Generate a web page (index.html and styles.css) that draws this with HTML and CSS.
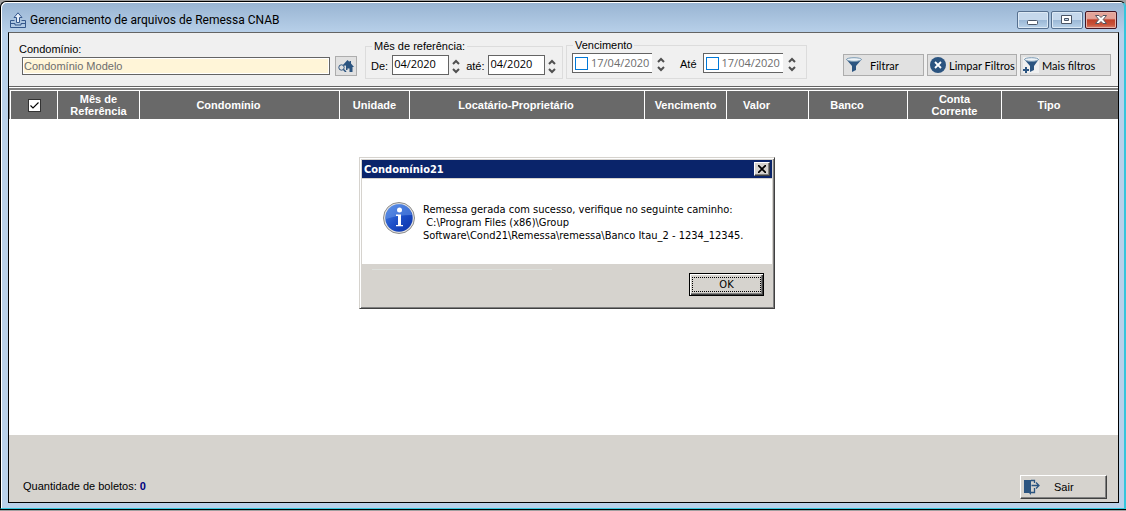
FILE: index.html
```html
<!DOCTYPE html>
<html lang="pt-BR">
  <head>
    <meta charset="UTF-8" />
    <meta name="viewport" content="width=device-width, initial-scale=1.0" />
    <title>Gerenciamento de arquivos de Remessa CNAB</title>
    <link rel="stylesheet" href="styles.css">
  </head>
  <body>
    <div class="window">
      <header class="titlebar">
        <svg class="app-icon" viewBox="0 0 16 16" width="16" height="16" fill="none" stroke="#35588c">
          <path d="M4.500 8.500H0.500V15.500H15.500V8.500H11.500M0.500 11.500H5V13H11V11.500H15.500" />
          <path d="M6.500 10.500V5.500H4L8 0.800L12 5.500H9.500V10.500Z" fill="#e6effa" />
        </svg>
        <h1>Gerenciamento de arquivos de Remessa CNAB</h1>
        <div class="window-buttons">
          <button type="button" class="win-btn" aria-label="Minimizar">
            <svg viewBox="0 0 30 16" width="30" height="16"><rect x="9.500" y="8.500" width="10" height="4" rx="1" fill="#fff" stroke="#4a5566" /></svg>
          </button>
          <button type="button" class="win-btn" aria-label="Maximizar">
            <svg viewBox="0 0 30 16" width="30" height="16"><path d="M9.500 3.500H19.500V11.500H9.500ZM12.500 6.500V8.500H16.500V6.500Z" fill="#fff" fill-rule="evenodd" stroke="#4a5566" /></svg>
          </button>
          <button type="button" class="win-btn win-close" aria-label="Fechar">
            <svg viewBox="0 0 30 16" width="30" height="16"><path d="M9.500 3.500H13L15 5.500L17 3.500H20.500L17.200 7.500L20.500 11.500H17L15 9.500L13 11.500H9.500L12.800 7.500Z" fill="#fff" stroke="#54555f" /></svg>
          </button>
        </div>
      </header>

      <main class="client">
        <form class="filters">
          <div class="field">
            <label for="condominio">Condomínio:</label>
            <div class="field-row">
              <input type="text" id="condominio" value="Condomínio Modelo" />
              <button type="button" class="search-btn" aria-label="Buscar condomínio">
                <svg viewBox="0 0 16 12" width="16" height="12">
                  <path d="M4 6L9.500 0L11.500 2V1H13V3.500L16 7H14.500V12H11.500V8.500H9.500V10H8V5.500Z" fill="#2b5480" />
                  <circle cx="3.500" cy="7.500" r="2.700" fill="#e1e1e1" stroke="#2b5480" />
                  <path d="M5.500 9.500L8 12" stroke="#2b5480" stroke-width="1.500" />
                </svg>
              </button>
            </div>
          </div>

          <fieldset class="months">
            <legend>Mês de referência:</legend>
            <label for="mesDe">De:</label>
            <input type="text" id="mesDe" class="month" value="04/2020" />
            <span class="spin">
              <button type="button" aria-label="Aumentar"><svg viewBox="0 0 8 6" width="8" height="6"><path d="M1 5L4 2L7 5" /></svg></button>
              <button type="button" aria-label="Diminuir"><svg viewBox="0 0 8 6" width="8" height="6"><path d="M1 1L4 4L7 1" /></svg></button>
            </span>
            <label for="mesAte">até:</label>
            <input type="text" id="mesAte" class="month" value="04/2020" />
            <span class="spin">
              <button type="button" aria-label="Aumentar"><svg viewBox="0 0 8 6" width="8" height="6"><path d="M1 5L4 2L7 5" /></svg></button>
              <button type="button" aria-label="Diminuir"><svg viewBox="0 0 8 6" width="8" height="6"><path d="M1 1L4 4L7 1" /></svg></button>
            </span>
          </fieldset>

          <fieldset class="due">
            <legend>Vencimento</legend>
            <div class="date">
              <input type="checkbox" aria-label="Usar data inicial" />
              <input type="text" value="17/04/2020" aria-label="Vencimento de" />
            </div>
            <span class="spin">
              <button type="button" aria-label="Aumentar"><svg viewBox="0 0 8 6" width="8" height="6"><path d="M1 5L4 2L7 5" /></svg></button>
              <button type="button" aria-label="Diminuir"><svg viewBox="0 0 8 6" width="8" height="6"><path d="M1 1L4 4L7 1" /></svg></button>
            </span>
            <label for="vencAte">Até</label>
            <div class="date">
              <input type="checkbox" aria-label="Usar data final" />
              <input type="text" id="vencAte" value="17/04/2020" />
            </div>
            <span class="spin">
              <button type="button" aria-label="Aumentar"><svg viewBox="0 0 8 6" width="8" height="6"><path d="M1 5L4 2L7 5" /></svg></button>
              <button type="button" aria-label="Diminuir"><svg viewBox="0 0 8 6" width="8" height="6"><path d="M1 1L4 4L7 1" /></svg></button>
            </span>
          </fieldset>

          <div class="actions">
            <button type="button" class="action filter">
              <svg viewBox="0 0 16 16" width="16" height="16"><path d="M0 2L6 9V15L10 13V9L16 2Z" fill="#2b5480" /><ellipse cx="8" cy="2.500" rx="7.500" ry="1.800" fill="#eef3f7" stroke="#7d9cb5" /></svg>
              <span>Filtrar</span>
            </button>
            <button type="button" class="action clear">
              <svg viewBox="0 0 16 16" width="16" height="16"><circle cx="8" cy="8" r="8" fill="#2b5480" /><path d="M5 5L11 11M11 5L5 11" stroke="#fff" stroke-width="1.800" /></svg>
              <span>Limpar Filtros</span>
            </button>
            <button type="button" class="action more">
              <svg viewBox="0 0 16 16" width="16" height="16"><rect width="16" height="16" fill="#f0f0f0" /><path d="M1 2L7 9V15L11 13V9L16 2Z" fill="#2b5480" /><ellipse cx="8.500" cy="2.500" rx="7" ry="1.800" fill="#eef3f7" stroke="#7d9cb5" /><path d="M3 10V16M0 13H6" stroke="#f0f0f0" stroke-width="4" /><path d="M3 10V16M0 13H6" stroke="#2b5480" stroke-width="2" /></svg>
              <span>Mais filtros</span>
            </button>
          </div>
        </form>

        <div class="grid">
          <table>
            <colgroup>
              <col class="col-check"><col class="col-month"><col class="col-condo"><col class="col-unit"><col>
              <col class="col-due"><col class="col-value"><col class="col-bank"><col class="col-account"><col class="col-type">
            </colgroup>
            <thead>
              <tr>
                <th><input type="checkbox" class="check-all" aria-label="Selecionar todos" checked /></th>
                <th>Mês de Referência</th>
                <th class="sortable">Condomínio</th>
                <th>Unidade</th>
                <th class="sortable">Locatário-Proprietário</th>
                <th>Vencimento</th>
                <th class="sortable">Valor</th>
                <th class="sortable">Banco</th>
                <th>Conta<br />Corrente</th>
                <th class="sortable">Tipo</th>
              </tr>
            </thead>
            <tbody></tbody>
          </table>
        </div>

        <footer class="footer">
          <p>Quantidade de boletos: <b>0</b></p>
          <button type="button" class="exit">
            <svg viewBox="0 0 16 16" width="16" height="16"><path d="M0 1H7V16L5 14H0Z" fill="#2b5480" /><path d="M7 1.500H10.500V4M10.500 9V13.500H7M7.500 6.500H14.500M12 3.500L15 6.500L12 9.500" fill="none" stroke="#2b5480" stroke-width="1.300" /></svg>
            <span>Sair</span>
          </button>
        </footer>
      </main>
    </div>

    <div class="dialog" role="dialog" aria-labelledby="dialogTitle">
      <div class="dialog-title">
        <h2 id="dialogTitle">Condomínio21</h2>
        <button type="button" aria-label="Fechar"><svg viewBox="0 0 8 8" width="8" height="8"><path d="M0 0L8 8M8 0L0 8" stroke="#000" stroke-width="1.700" /></svg></button>
      </div>
      <div class="dialog-body">
        <svg viewBox="0 0 32 32" width="32" height="32">
          <defs>
            <linearGradient id="blue" x1="0" y1="0" x2="1" y2="1">
              <stop offset="0" stop-color="#4a84e4" /><stop offset="0.500" stop-color="#1d50c8" /><stop offset="1" stop-color="#0a30a8" />
            </linearGradient>
          </defs>
          <circle cx="16" cy="16" r="15.500" fill="#e2e2e2" stroke="#8c8c8c" />
          <circle cx="16" cy="16" r="13.700" fill="url(#blue)" />
          <path d="M3 17A13 13 0 0 1 29 13Q15 13 3 17Z" fill="#6b9bea" opacity="0.500" />
          <circle cx="16.500" cy="8" r="2.500" fill="#fff" />
          <path d="M13 12.500H18V23H20V24.300H13V23H15V14H13Z" fill="#fff" />
        </svg>
        <p>Remessa gerada com sucesso, verifique no seguinte caminho:<br />&nbsp;C:\Program Files (x86)\Group<br />Software\Cond21\Remessa\remessa\Banco Itau_2 - 1234_12345.</p>
      </div>
      <div class="dialog-footer">
        <button type="button" class="ok"><span>OK</span></button>
      </div>
    </div>
  </body>
</html>
```
FILE: styles.css
```css
* {
  box-sizing: border-box;
}
body {
  margin: 0;
  padding: 1px 0 2px;
  font-family: "Liberation Sans", Arial, sans-serif;
  font-size: 11px;
  line-height: 13px;
  color: #000;
  background-color: #a0a0a0;
}
h1,
h2,
p {
  margin: 0;
}
button,
input {
  font: inherit;
  color: inherit;
  padding: 0;
  margin: 0;
}
svg {
  display: block;
  flex: none;
}

/* window frame */
.window {
  display: flex;
  flex-direction: column;
  height: calc(100vh - 3px);
  padding: 0 6px 5px 7px;
  border: 1px solid #000;
  border-right: 1px solid #35c5dc;
  border-bottom: 1px solid #35c5dc;
  border-radius: 6px 6px 0 0;
  background: linear-gradient(#98b4d2, #b9d1ea 32px);
  box-shadow: inset 1px 1px 0 #fff, inset -1px 0 0 #35c5dc, 0 1px 0 #000;
}
.titlebar {
  display: flex;
  align-items: center;
  height: 30px;
  padding: 6px 2px 0 2px;
  gap: 4px;
}
.titlebar h1 {
  flex: 1;
  font-family: Roboto, "Noto Sans", sans-serif;
  font-size: 12px;
  font-weight: normal;
  line-height: 16px;
}
.window-buttons {
  display: flex;
  gap: 2px;
}
.win-btn {
  width: 32px;
  height: 18px;
  border: 1px solid #56708f;
  border-radius: 2px;
  background: linear-gradient(#c5d8ec 0 48%, #9ab7d5 50%, #b9d2e9);
  box-shadow: inset 0 0 0 1px #dce9f5;
}
.win-close {
  border-color: #431422;
  background: linear-gradient(#e3a398 0 40%, #c04029 50%, #c9533a 80%, #d98570);
  box-shadow: inset 0 0 0 1px #e6b3aa;
}

.client {
  flex: 1;
  display: flex;
  flex-direction: column;
  border: 1px solid #000;
  border-top-color: #646464;
}

/* filters */
.filters {
  display: flex;
  align-items: flex-start;
  height: 54px;
  padding: 6px 7px 0 10px;
  background-color: #f0f0f0;
  border-bottom: 1px solid #646464;
}
.field {
  flex: none;
  margin-right: 8px;
  padding-top: 4px;
}
.field label {
  display: block;
}
.field-row {
  display: flex;
  align-items: center;
  gap: 5px;
  padding-left: 3px;
}
#condominio {
  width: 308px;
  height: 18px;
  padding-left: 1px;
  color: #6d6d6d;
  background-color: #fff5d8;
  border: 1px solid #646464;
  box-shadow: inset 0 0 0 1px #fff;
}
.search-btn {
  display: flex;
  align-items: center;
  justify-content: center;
  width: 22px;
  height: 20px;
  background-color: #e1e1e1;
  border: 1px solid #adadad;
}
fieldset {
  display: flex;
  flex: none;
  align-items: center;
  height: 40px;
  min-width: 0;
  margin: 0;
  padding: 0 4px 4px 5px;
  border: 1px solid #dcdcdc;
}
fieldset label {
  padding-top: 3px;
}
legend {
  margin-left: 1px;
  padding: 0 2px;
}
.months {
  width: 198px;
  height: 39px;
  margin: 1px 3px 0 0;
  padding-bottom: 1px;
}
.month {
  width: 57px;
  height: 20px;
  margin-left: 4px;
  padding: 0 0 3px 1px;
  font-family: "Open Sans", "Noto Sans", sans-serif;
  background-color: #fff;
  border: 1px solid #646464;
}
.spin {
  display: flex;
  flex-direction: column;
  gap: 3px;
  margin: 0 6px 0 3px;
  padding-top: 3px;
}
.spin button {
  display: block;
  height: 6px;
  border: 0;
  background: none;
}
.spin path {
  fill: none;
  stroke: #505050;
  stroke-width: 2;
}
.due {
  width: 241px;
}
.due .spin {
  margin-left: 5px;
}
.due label {
  margin: 0 6px 0 9px;
}
.date {
  display: flex;
  align-items: center;
  width: 80px;
  height: 20px;
  background-color: #fff;
  border: 1px solid #646464;
  border-right: 0;
}
.date [type="checkbox"] {
  appearance: none;
  flex: none;
  width: 13px;
  height: 13px;
  margin: 0 3px 0 2px;
  border: 1px solid #0078d7;
}
.date [type="text"] {
  width: 60px;
  height: 16px;
  padding-bottom: 2px;
  font-family: "Open Sans", "Noto Sans", sans-serif;
  color: #6d6d6d;
  background: none;
  border: 0;
}
.actions {
  display: flex;
  gap: 3px;
  margin-left: auto;
  padding-top: 15px;
}
.action {
  display: flex;
  align-items: center;
  gap: 3px;
  height: 22px;
  padding: 0 2px;
  font-family: Lato, "Noto Sans", sans-serif;
  white-space: nowrap;
  background-color: #e1e1e1;
  border: 1px solid #adadad;
}
.filter {
  width: 81px;
  gap: 8px;
}
.clear {
  width: 90px;
}
.more {
  width: 91px;
}

/* grid */
.grid {
  flex: 1;
  background-color: #fff;
  border-top: 1px solid #fff;
}
table {
  width: 100%;
  table-layout: fixed;
  border-collapse: separate;
  border-spacing: 0;
  border: 1px solid #808080;
  border-width: 2px 0 0 1px;
  background-color: #696969;
}
th {
  height: 29px;
  padding: 0;
  line-height: 12px;
  color: #fff;
  border-top: 1px solid #fff;
  border-right: 1px solid #fff;
}
th:first-child {
  border-left: 1px solid #fff;
}
th:last-child {
  border-right: 0;
}
.sortable {
  padding-right: 22px;
}
.col-check { width: 48px; }
.col-month { width: 82px; }
.col-condo { width: 200px; }
.col-unit { width: 70px; }
.col-due { width: 82px; }
.col-value { width: 82px; }
.col-bank { width: 99px; }
.col-account { width: 94px; }
.col-type { width: 116px; }
.check-all {
  appearance: none;
  display: block;
  width: 13px;
  height: 13px;
  margin: 0 auto;
  background: #fff url("data:image/svg+xml,%3Csvg xmlns='http://www.w3.org/2000/svg' viewBox='0 0 11 11'%3E%3Cpath d='M1.500 5.500L4 8L9.500 2.500' fill='none' stroke='%23000' stroke-width='1.100'/%3E%3C/svg%3E");
  border: 1px solid #333;
}

.footer {
  display: flex;
  justify-content: space-between;
  align-items: flex-end;
  height: 67px;
  padding: 0 11px 3px 14px;
  background-color: #d6d3ce;
}
.footer p {
  padding-bottom: 6px;
}
.footer b {
  color: #000080;
}
.exit {
  display: flex;
  align-items: center;
  gap: 14px;
  width: 87px;
  height: 24px;
  padding: 0 3px;
  background-color: #d6d3ce;
  border: 1px solid;
  border-color: #fff #404040 #404040 #fff;
  box-shadow: inset -1px -1px 0 #808080;
}

/* message box */
.dialog {
  position: absolute;
  top: 157px;
  left: calc(50% - 204px);
  width: 416px;
  padding: 1px;
  font-family: "DejaVu Sans Condensed", "DejaVu Sans", sans-serif;
  background-color: #d6d3ce;
  border: 1px solid;
  border-color: #d6d3ce #404040 #404040 #d6d3ce;
  box-shadow: inset 1px 1px 0 #fff, inset -1px -1px 0 #808080;
}
.dialog-title {
  display: flex;
  align-items: center;
  justify-content: space-between;
  height: 18px;
  margin: 1px 1px 0;
  padding: 0 2px;
  color: #fff;
  background-color: #0a246a;
}
.dialog-title h2 {
  font-size: 11px;
}
.dialog-title button,
.ok {
  display: flex;
  align-items: center;
  justify-content: center;
  background-color: #d6d3ce;
  border: 1px solid;
  border-color: #fff #404040 #404040 #fff;
  box-shadow: inset -1px -1px 0 #808080;
}
.dialog-title button {
  width: 16px;
  height: 14px;
}
.dialog-body {
  display: flex;
  gap: 8px;
  height: 85px;
  margin: 1px 1px 0;
  padding: 23px 21px;
  background-color: #fff;
}
.dialog-body p {
  padding-top: 1px;
  white-space: nowrap;
}
.dialog-footer {
  display: flex;
  justify-content: space-between;
  height: 43px;
  padding: 9px 9px 0 11px;
}
.dialog-footer::before {
  content: "";
  width: 180px;
  height: 1px;
  margin-top: -4px;
  background-color: #dde0dc;
}
.ok {
  width: 75px;
  height: 23px;
  padding: 2px;
  border-color: #000;
  box-shadow: inset 1px 1px 0 #fff, inset -1px -1px 0 #404040, inset -2px -2px 0 #808080;
}
.ok span {
  flex: 1;
  border: 1px dotted #000;
}
```
